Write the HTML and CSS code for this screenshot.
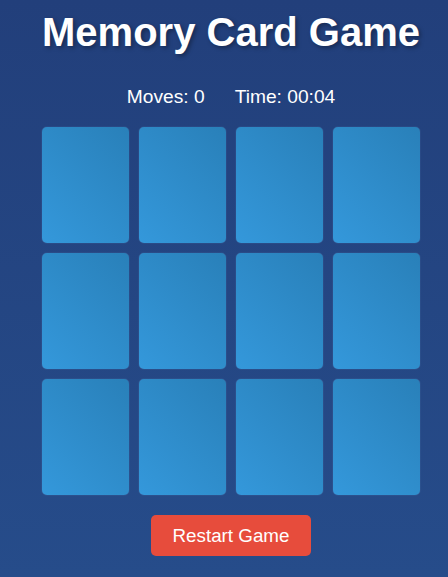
FILE: index.html
```html
<!DOCTYPE html>
<html lang="en">
<head>
<meta charset="utf-8">
<title>Memory Card Game</title>
<link rel="stylesheet" href="styles.css">
</head>
<body>
<main class="game">
  <h1 class="title">Memory Card Game</h1>
  <div class="stats">
    <span class="stat">Moves: 0</span>
    <span class="stat">Time: 00:04</span>
  </div>
  <div class="board">
    <div class="card"></div><div class="card"></div><div class="card"></div><div class="card"></div>
    <div class="card"></div><div class="card"></div><div class="card"></div><div class="card"></div>
    <div class="card"></div><div class="card"></div><div class="card"></div><div class="card"></div>
  </div>
  <button class="restart">Restart Game</button>
</main>
</body>
</html>
```
FILE: styles.css
```css
html, body {
  margin: 0;
  height: 100%;
}
body {
  background: linear-gradient(to bottom, #223f7b, #264c8a);
  font-family: "Liberation Sans", Arial, sans-serif;
  color: #fff;
  padding-left: 14px;
  box-sizing: border-box;
  overflow: hidden;
}
.game {
  display: flex;
  flex-direction: column;
  align-items: center;
  padding-top: 9px;
}
.title {
  margin: 0;
  font-size: 40px;
  font-weight: bold;
  line-height: 46px;
  text-shadow: 2px 2px 4px rgba(0, 0, 0, 0.35);
}
.stats {
  margin-top: 31px;
  display: flex;
  font-size: 19.2px;
  line-height: 22px;
}
.stat {
  margin: 0 15px;
}
.board {
  margin-top: 19px;
  display: grid;
  grid-template-columns: repeat(4, 87px);
  grid-template-rows: repeat(3, 116px);
  gap: 10px;
}
.card {
  border-radius: 5px;
  background: linear-gradient(45deg, #3498db, #2980b9);
  box-shadow: 0 0 1px rgba(120, 170, 220, 0.8);
}
.restart {
  margin-top: 20px;
  width: 160px;
  height: 41px;
  padding: 0;
  border: none;
  border-radius: 5px;
  background: #e74c3c;
  color: #fff;
  font-family: "Liberation Sans", Arial, sans-serif;
  font-size: 18.8px;
}
```
